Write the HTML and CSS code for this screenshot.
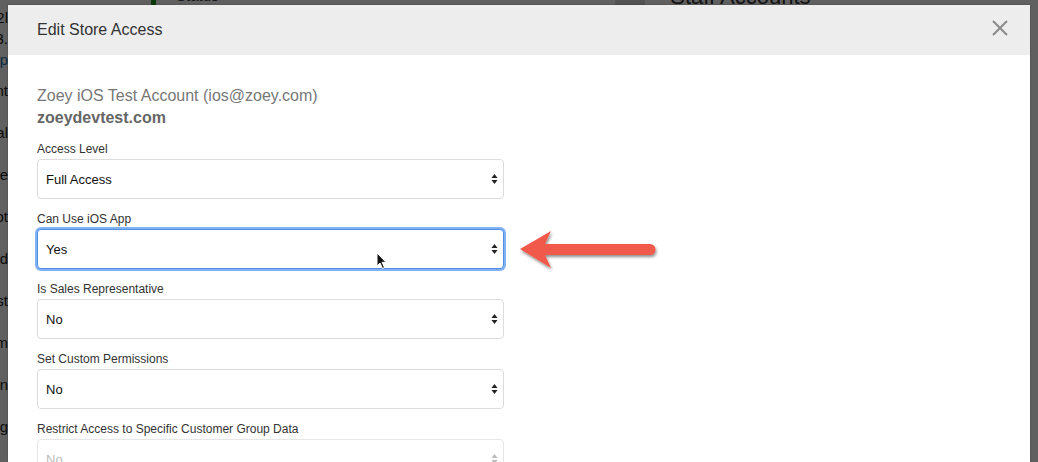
FILE: index.html
```html
<!DOCTYPE html>
<html>
<head>
<meta charset="utf-8">
<link rel="stylesheet" href="styles.css">
</head>
<body>
<div class="page">
  <div class="page-top">
    <div class="green-bar"></div>
    <span class="status">Status</span>
    <span class="paid">PAID ACCOUNT</span>
    <span class="dark-box"></span>
    <span class="staff">Staff Accounts</span>
  </div>
  <div class="page-side">
    <div class="side-line">Store 2l</div>
    <div class="side-line">Plan 3.</div>
    <div class="side-line link">Help</div>
    <div class="side-line">Account</div>
    <div class="side-line">Legal</div>
    <div class="side-line">Code</div>
    <div class="side-line">Root</div>
    <div class="side-line">Field</div>
    <div class="side-line">List</div>
    <div class="side-line">Form</div>
    <div class="side-line">Sign</div>
    <div class="side-line">Blog</div>
  </div>
</div>
<div class="backdrop"></div>

<div class="modal">
  <div class="modal-header">
    <h1 class="modal-title">Edit Store Access</h1>
    <svg class="close" width="18" height="18" viewBox="0 0 18 18"><path d="M2 2 L16 16 M16 2 L2 16" stroke="#8a8a8a" stroke-width="2" fill="none"/></svg>
  </div>
  <div class="modal-body">
    <div class="account-name">Zoey iOS Test Account (ios@zoey.com)</div>
    <div class="account-domain">zoeydevtest.com</div>

    <div class="field">
      <div class="label">Access Level</div>
      <div class="select"><span>Full Access</span><svg class="caret" width="7" height="12" viewBox="0 0 7 12"><path d="M3.5 1 L6.5 5 L0.5 5 Z M3.5 11 L6.5 7 L0.5 7 Z" fill="#222"/></svg></div>
    </div>
    <div class="field">
      <div class="label">Can Use iOS App</div>
      <div class="select focus"><span>Yes</span><svg class="caret" width="7" height="12" viewBox="0 0 7 12"><path d="M3.5 1 L6.5 5 L0.5 5 Z M3.5 11 L6.5 7 L0.5 7 Z" fill="#222"/></svg></div>
    </div>
    <div class="field">
      <div class="label">Is Sales Representative</div>
      <div class="select"><span>No</span><svg class="caret" width="7" height="12" viewBox="0 0 7 12"><path d="M3.5 1 L6.5 5 L0.5 5 Z M3.5 11 L6.5 7 L0.5 7 Z" fill="#222"/></svg></div>
    </div>
    <div class="field">
      <div class="label">Set Custom Permissions</div>
      <div class="select"><span>No</span><svg class="caret" width="7" height="12" viewBox="0 0 7 12"><path d="M3.5 1 L6.5 5 L0.5 5 Z M3.5 11 L6.5 7 L0.5 7 Z" fill="#222"/></svg></div>
    </div>
    <div class="field">
      <div class="label">Restrict Access to Specific Customer Group Data</div>
      <div class="select disabled"><span>No</span><svg class="caret" width="7" height="12" viewBox="0 0 7 12"><path d="M3.5 1 L6.5 5 L0.5 5 Z M3.5 11 L6.5 7 L0.5 7 Z" fill="#bbb"/></svg></div>
    </div>
  </div>
</div>

<svg class="arrow" width="155" height="50" viewBox="0 0 155 50">
  <defs>
    <filter id="sh" x="-20%" y="-30%" width="140%" height="160%">
      <feDropShadow dx="1" dy="2" stdDeviation="1.6" flood-color="#000" flood-opacity="0.45"/>
    </filter>
  </defs>
  <path d="M10 24 L41 6 L35 19 L140 19 A5.5 5.5 0 0 1 140 30 L35 30 L41 43 Z" fill="#f15a4c" filter="url(#sh)"/>
</svg>

<svg class="cursor" width="12" height="18" viewBox="0 0 12 18">
  <path d="M1 1 L1 14 L4 11 L6.5 16.5 L8.5 15.6 L6 10.3 L10 10.3 Z" fill="#111" stroke="#fff" stroke-width="1"/>
</svg>
</body>
</html>
```

FILE: styles.css
```css
html, body {
  margin: 0;
  padding: 0;
  width: 1038px;
  height: 462px;
  overflow: hidden;
  font-family: "Liberation Sans", Arial, Helvetica, sans-serif;
  background: #fff;
}

.page {
  position: absolute;
  inset: 0;
  background: #fff;
}

.page-top {
  display: flex;
  align-items: flex-start;
  height: 14px;
  margin-top: -13px;
  padding-left: 151px;
}
.green-bar {
  width: 5px;
  height: 20px;
  background: #1f9a1f;
}
.status {
  margin-left: 20px;
  font-size: 15px;
  color: #444;
}
.paid {
  margin-left: 140px;
  font-size: 14px;
  font-weight: bold;
  color: #2a9b2a;
  letter-spacing: 0.5px;
}
.dark-box {
  margin-left: 145px;
  width: 30px;
  height: 18px;
  background: #ddd;
}
.staff {
  margin-left: 25px;
  font-size: 22px;
  color: #333;
  margin-top: -3px;
}

.page-side {
  width: 8px;
  margin-top: 6px;
  display: flex;
  flex-direction: column;
  align-items: flex-end;
}
.side-line {
  font-size: 15px;
  color: #222;
  white-space: nowrap;
  height: 21px;
  line-height: 21px;
}
.side-line:nth-child(n+4) {
  height: 42px;
  line-height: 42px;
}
.side-line.link {
  color: #2a6fb0;
}

.backdrop {
  position: absolute;
  inset: 0;
  background: rgba(0, 0, 0, 0.625);
}

.modal {
  position: absolute;
  left: 8px;
  top: 5px;
  width: 1022px;
  height: 457px;
  overflow: hidden;
  background: #fff;
  box-shadow: 0 0 2px rgba(0,0,0,0.3);
}

.modal-header {
  height: 50px;
  background: #ededed;
  display: flex;
  align-items: center;
  justify-content: space-between;
  padding: 0 21px 0 29px;
}
.modal-title {
  margin: 0;
  font-size: 16px;
  font-weight: normal;
  color: #333;
}
.close {
  margin-top: -4px;
}

.modal-body {
  padding: 30px 29px 0 29px;
}

.account-name {
  font-size: 16px;
  line-height: 22px;
  color: #777;
}
.account-domain {
  font-size: 16px;
  line-height: 22px;
  font-weight: bold;
  color: #666;
  margin-bottom: 11px;
}

.field {
  margin-bottom: 11px;
}
.label {
  font-size: 12px;
  line-height: 18px;
  color: #333;
  margin-bottom: 1px;
}
.select {
  box-sizing: border-box;
  width: 467px;
  height: 40px;
  border: 1px solid #dcdcdc;
  border-radius: 4px;
  display: flex;
  align-items: center;
  justify-content: space-between;
  padding: 0 5px 0 8px;
  font-size: 13px;
  color: #111;
  background: #fff;
}
.select.focus {
  border: 1px solid #4f8fea;
  box-shadow: 0 0 0 2px #82b1f3;
}
.select.disabled {
  color: #bbb;
  border-color: #e6e6e6;
}

.arrow {
  position: absolute;
  left: 510px;
  top: 225px;
}
.cursor {
  position: absolute;
  left: 376px;
  top: 252px;
}
```
